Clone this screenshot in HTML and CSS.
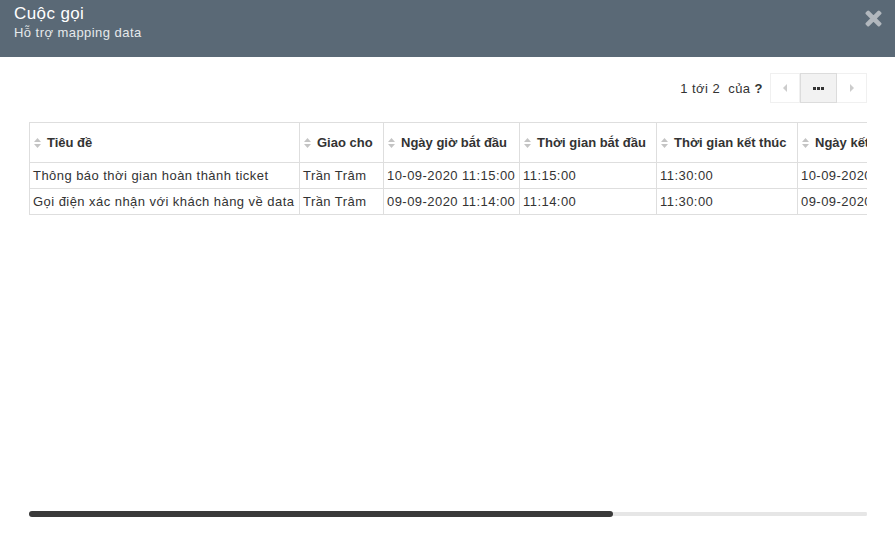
FILE: index.html
```html
<!DOCTYPE html>
<html lang="vi">
<head>
<meta charset="utf-8">
<title>Cuộc gọi</title>
<link rel="stylesheet" href="styles.css">
</head>
<body>
<div class="modal-header">
  <div class="titles">
    <div class="title">Cuộc gọi</div>
    <div class="subtitle">Hỗ trợ mapping data</div>
  </div>
  <button class="close" aria-label="close">
    <svg width="17" height="17" viewBox="0 0 17 17"><path d="M3.2 2 L8.5 7.2 L13.8 2 L15 3.2 L9.8 8.5 L15 13.8 L13.8 15 L8.5 9.8 L3.2 15 L2 13.8 L7.2 8.5 L2 3.2 Z" fill="#b2b8be" stroke="#b2b8be" stroke-width="3" stroke-linejoin="round"/></svg>
  </button>
</div>
<div class="content">
  <div class="pager">
    <span class="pager-info">1 tới 2&nbsp; của <b>?</b></span>
    <div class="pager-btns">
      <span class="pbtn"><svg width="5" height="8" viewBox="0 0 5 8"><path d="M4 0 L0 4 L4 8 Z" fill="#ccc"/></svg></span>
      <span class="pbtn active"><svg width="11" height="3" viewBox="0 0 11 3"><rect x="0" y="0" width="3" height="3" fill="#333"/><rect x="4" y="0" width="3" height="3" fill="#333"/><rect x="8" y="0" width="3" height="3" fill="#333"/></svg></span>
      <span class="pbtn"><svg width="5" height="8" viewBox="0 0 5 8"><path d="M1 0 L5 4 L1 8 Z" fill="#ccc"/></svg></span>
    </div>
  </div>
  <div class="scroller">
    <table class="grid">
      <colgroup>
        <col class="c1"><col class="c2"><col class="c3"><col class="c4"><col class="c5"><col class="c6"><col class="c7"><col class="c8">
      </colgroup>
      <thead>
        <tr>
          <th><svg class="sort" viewBox="0 0 7 10"><path d="M0 4 L3.5 0 L7 4 Z M0 6 L7 6 L3.5 10 Z"/></svg>Tiêu đề</th>
          <th><svg class="sort" viewBox="0 0 7 10"><path d="M0 4 L3.5 0 L7 4 Z M0 6 L7 6 L3.5 10 Z"/></svg>Giao cho</th>
          <th><svg class="sort" viewBox="0 0 7 10"><path d="M0 4 L3.5 0 L7 4 Z M0 6 L7 6 L3.5 10 Z"/></svg>Ngày giờ bắt đầu</th>
          <th><svg class="sort" viewBox="0 0 7 10"><path d="M0 4 L3.5 0 L7 4 Z M0 6 L7 6 L3.5 10 Z"/></svg>Thời gian bắt đầu</th>
          <th><svg class="sort" viewBox="0 0 7 10"><path d="M0 4 L3.5 0 L7 4 Z M0 6 L7 6 L3.5 10 Z"/></svg>Thời gian kết thúc</th>
          <th><svg class="sort" viewBox="0 0 7 10"><path d="M0 4 L3.5 0 L7 4 Z M0 6 L7 6 L3.5 10 Z"/></svg>Ngày kết thúc</th>
          <th><svg class="sort" viewBox="0 0 7 10"><path d="M0 4 L3.5 0 L7 4 Z M0 6 L7 6 L3.5 10 Z"/></svg>Trạng thái</th>
          <th><svg class="sort" viewBox="0 0 7 10"><path d="M0 4 L3.5 0 L7 4 Z M0 6 L7 6 L3.5 10 Z"/></svg>Người tạo</th>
        </tr>
      </thead>
      <tbody>
        <tr>
          <td>Thông báo thời gian hoàn thành ticket</td>
          <td>Trần Trâm</td>
          <td>10-09-2020 11:15:00</td>
          <td>11:15:00</td>
          <td>11:30:00</td>
          <td>10-09-2020</td>
          <td>Mới</td>
          <td>Trần Trâm</td>
        </tr>
        <tr>
          <td>Gọi điện xác nhận với khách hàng về data</td>
          <td>Trần Trâm</td>
          <td>09-09-2020 11:14:00</td>
          <td>11:14:00</td>
          <td>11:30:00</td>
          <td>09-09-2020</td>
          <td>Mới</td>
          <td>Trần Trâm</td>
        </tr>
      </tbody>
    </table>
  </div>
  <div class="hscroll"><div class="hscroll-thumb"></div></div>
</div>
</body>
</html>
```
FILE: styles.css
```css
html, body {
  margin: 0;
  padding: 0;
  background: #fff;
  font-family: "Liberation Sans", Arial, sans-serif;
  color: #333;
}
.modal-header {
  height: 57px;
  background: #5a6976;
  display: flex;
  justify-content: space-between;
  align-items: flex-start;
  padding: 0 13px 0 14px;
  box-sizing: border-box;
}
.titles {
  padding-top: 3px;
}
.title {
  font-size: 17px;
  line-height: 21px;
  letter-spacing: 0.4px;
  color: #fff;
}
.subtitle {
  font-size: 13px;
  line-height: 18px;
  letter-spacing: 0.45px;
  color: #e6e9ec;
}
.close {
  border: 0;
  background: transparent;
  padding: 0;
  margin-top: 10px;
  width: 17px;
  height: 17px;
  display: block;
}
.close svg { display: block; }
.content {
  padding: 16px 28px 0 29px;
}
.pager {
  display: flex;
  justify-content: flex-end;
  align-items: center;
  height: 30px;
}
.pager-info {
  font-size: 13px;
  letter-spacing: 0.45px;
  color: #333;
  margin-right: 7px;
}
.pager-info b { font-weight: bold; }
.pager-btns {
  display: flex;
  height: 30px;
}
.pbtn {
  width: 30px;
  height: 30px;
  box-sizing: border-box;
  border: 1px solid #f0f0f0;
  display: flex;
  align-items: center;
  justify-content: center;
  background: #fff;
}
.pbtn + .pbtn { border-left: 0; }
.pbtn.active {
  width: 37px;
  background: #f2f2f2;
  border: 1px solid #dcdcdc;
}
.pbtn svg { display: block; }
.scroller {
  margin-top: 19px;
  height: 389px;
  overflow: hidden;
}
.hscroll {
  height: 6px;
  display: flex;
  align-items: center;
  background: linear-gradient(#fff 0 1px, #e6e6e6 1px 5px, #fff 5px);
  border-radius: 3px;
}
.hscroll-thumb {
  width: 584px;
  height: 6px;
  background: #3a3a3a;
  border-radius: 3px;
}
.grid {
  table-layout: fixed;
  width: 1202px;
  border-collapse: collapse;
}
.c1 { width: 270px; }
.c2 { width: 84px; }
.c3 { width: 136px; }
.c4 { width: 137px; }
.c5 { width: 141px; }
.c6 { width: 140px; }
.c7 { width: 120px; }
.c8 { width: 174px; }
.grid th, .grid td {
  border: 1px solid #dedede;
  text-align: left;
  white-space: nowrap;
  overflow: hidden;
}
.grid th {
  height: 40px;
  font-weight: bold;
  padding: 0 4px;
  box-sizing: border-box;
  font-size: 13px;
  color: #333;
}
.grid td {
  height: 26px;
  box-sizing: border-box;
  padding: 0 3px;
  font-size: 13px;
  letter-spacing: 0.45px;
  color: #333;
}
.sort {
  display: inline-block;
  width: 7px;
  height: 10px;
  margin-right: 6px;
  vertical-align: -1px;
  fill: #c4c4c4;
}
```
